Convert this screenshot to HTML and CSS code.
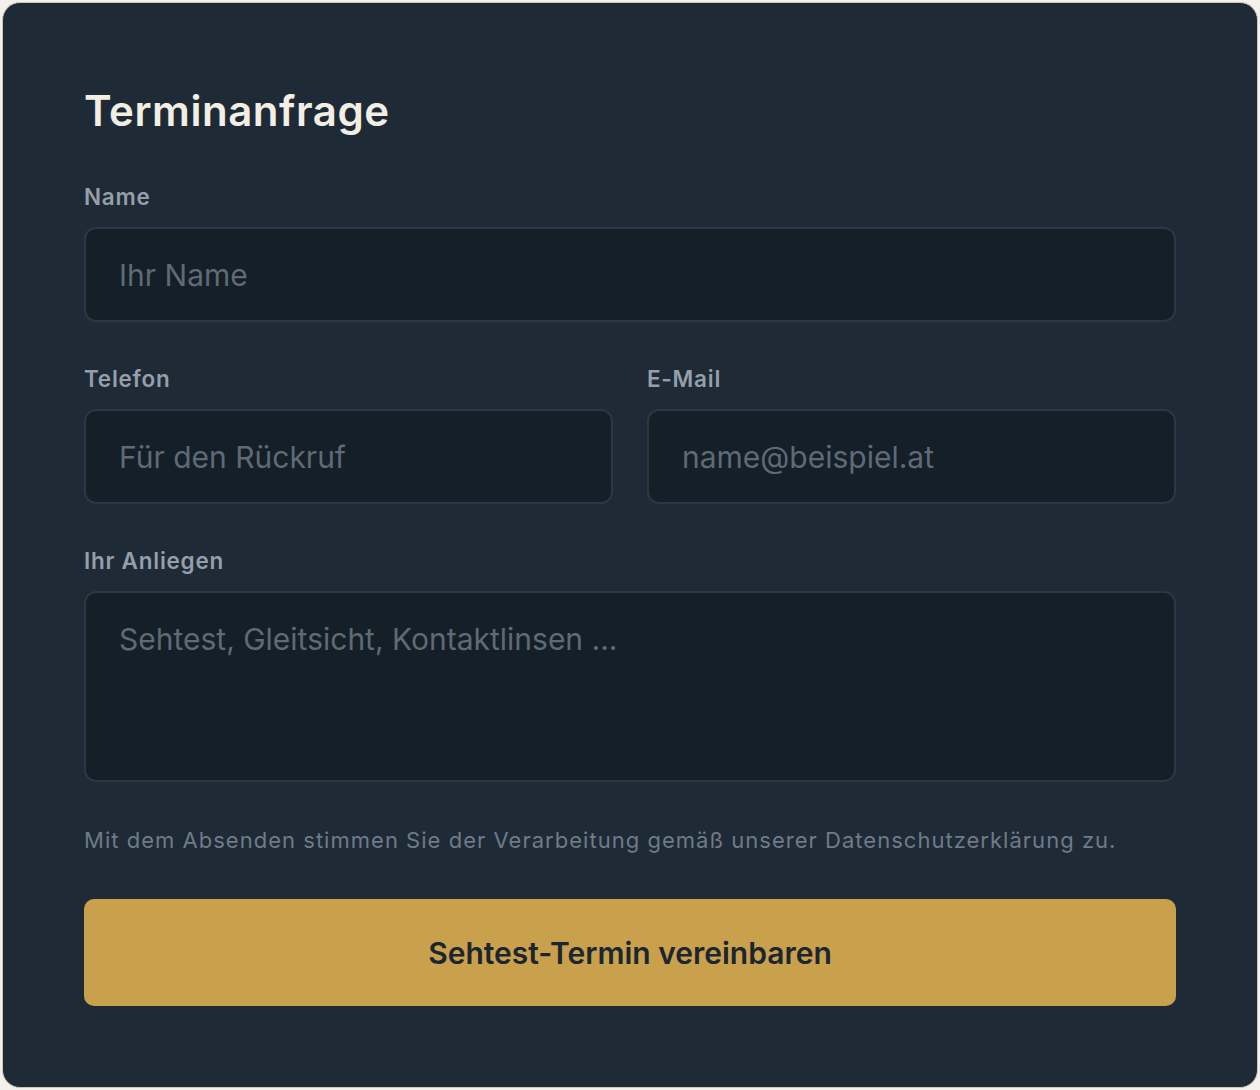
FILE: index.html
```html
<!DOCTYPE html>
<html lang="de">
<head>
    <meta charset="UTF-8">
    <meta name="viewport" content="width=device-width, initial-scale=1.0">
    <title>Terminanfrage</title>
    <link rel="stylesheet" href="styles.css">
</head>
<body>
    <div class="card">
        <h2 class="card-title">Terminanfrage</h2>

        <form class="booking-form">
            <div class="field">
                <label for="name">Name</label>
                <input type="text" id="name" placeholder="Ihr Name">
            </div>

            <div class="field-row">
                <div class="field">
                    <label for="phone">Telefon</label>
                    <input type="tel" id="phone" placeholder="Für den Rückruf">
                </div>
                <div class="field">
                    <label for="email">E-Mail</label>
                    <input type="email" id="email" placeholder="name@beispiel.at">
                </div>
            </div>

            <div class="field">
                <label for="message">Ihr Anliegen</label>
                <textarea id="message" placeholder="Sehtest, Gleitsicht, Kontaktlinsen ..."></textarea>
            </div>

            <p class="privacy">Mit dem Absenden stimmen Sie der Verarbeitung gemäß unserer Datenschutzerklärung zu.</p>

            <button type="submit" class="submit-button">Sehtest-Termin vereinbaren</button>
        </form>
    </div>
</body>
</html>
```

FILE: styles.css
```css
body {
    margin: 0;
    padding: 2px;
    background: #f4f1eb;
    font-family: Inter, "Noto Sans", sans-serif;
}

.card {
    box-sizing: border-box;
    height: 1086px;
    background: #1e2a36;
    border: 1px solid #cdc8be;
    border-radius: 18px;
    padding: 83px 81px 81px;
}

.card-title {
    margin: 0 0 48px;
    font-size: 42px;
    line-height: 50px;
    font-weight: 600;
    color: #f3eee3;
    letter-spacing: 0.55px;
}

.booking-form {
    display: flex;
    flex-direction: column;
}

.field {
    display: flex;
    flex-direction: column;
    gap: 17px;
    margin-bottom: 44px;
}

.field-row {
    display: grid;
    grid-template-columns: 1fr 1fr;
    gap: 34px;
}

label {
    font-size: 22.5px;
    line-height: 26px;
    font-weight: 600;
    letter-spacing: 0.75px;
    color: #949fab;
}

input,
textarea {
    box-sizing: border-box;
    width: 100%;
    height: 95px;
    padding: 0 33px;
    background: #141f28;
    border: 2px solid #2a3744;
    border-radius: 12px;
    font-family: inherit;
    font-size: 30px;
    color: #e6e2da;
    outline: none;
}

textarea {
    height: 191px;
    padding: 26px 33px;
    resize: none;
    line-height: 40px;
}

input::placeholder,
textarea::placeholder {
    color: #5e6a76;
}

.privacy {
    margin: 1px 0 46px;
    font-size: 22px;
    line-height: 26px;
    letter-spacing: 1.02px;
    color: #6e7b88;
}

.submit-button {
    height: 107px;
    border: none;
    border-radius: 10px;
    background: #c9a14c;
    color: #1b2631;
    font-family: inherit;
    font-size: 30px;
    font-weight: 600;
    cursor: pointer;
}
```
